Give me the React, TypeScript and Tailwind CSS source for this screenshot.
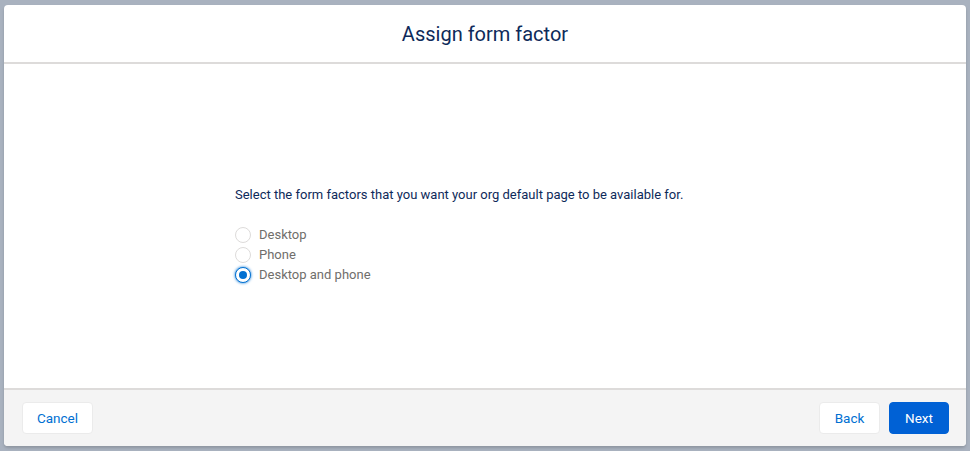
import { useState } from 'react';

const OPTIONS = ['Desktop', 'Phone', 'Desktop and phone'] as const;

export default function App() {
  const [selected, setSelected] = useState<string>('Desktop and phone');

  return (
    <div
      className="h-[451px] w-[970px] overflow-hidden bg-[#a9b2bf] pl-[4px] pr-[4px] pt-[5px]"
      style={{ fontFamily: 'Roboto, "Noto Sans", Arial, sans-serif' }}
    >
      {/* Modal */}
      <div className="flex h-[441px] w-[962px] flex-col overflow-hidden rounded-[4px] bg-white shadow-[0_2px_3px_rgba(0,0,0,0.16)]">
        {/* Header */}
        <div className="flex h-[59px] flex-none items-center justify-center border-b-2 border-[#dddbda]">
          <h2 className="text-[20px] leading-[24px] text-[#0e2a5a]">Assign form factor</h2>
        </div>

        {/* Body */}
        <div className="flex flex-1 items-center justify-center pt-[18px]">
          <div className="w-[500px]">
            <p className="text-[13px] leading-[20px] text-[#0e2a5a]">
              Select the form factors that you want your org default page to be available for.
            </p>
            <div className="mt-[20px] flex flex-col">
              {OPTIONS.map(opt => {
                const on = selected === opt;
                return (
                  <label
                    key={opt}
                    className="flex h-[20px] cursor-pointer items-center gap-[8px]"
                    onClick={() => setSelected(opt)}
                  >
                    <span
                      className={
                        on
                          ? 'flex h-[16px] w-[16px] items-center justify-center rounded-full border border-[#0070d2] bg-white shadow-[0_0_3px_#0070d2]'
                          : 'flex h-[16px] w-[16px] items-center justify-center rounded-full border border-[#dddbda] bg-white'
                      }
                    >
                      {on && <span className="h-[8px] w-[8px] rounded-full bg-[#0070d2]" />}
                    </span>
                    <span className="text-[13px] leading-[20px] text-[#706e6b]">{opt}</span>
                  </label>
                );
              })}
            </div>
          </div>
        </div>

        {/* Footer */}
        <div className="flex h-[58px] flex-none items-center justify-between border-t-2 border-[#dddbda] bg-[#f4f4f4] pl-[18px] pr-[17px]">
          <button className="h-[32px] w-[71px] rounded-[4px] border border-[#ebebeb] bg-white text-[13.5px] text-[#0070d2]">
            Cancel
          </button>
          <div className="flex gap-[9px]">
            <button className="h-[32px] w-[61px] rounded-[4px] border border-[#ebebeb] bg-white text-[13.5px] text-[#0070d2]">
              Back
            </button>
            <button className="h-[32px] w-[60px] rounded-[4px] border border-[#0061d5] bg-[#0061d5] text-[13.5px] text-white">
              Next
            </button>
          </div>
        </div>
      </div>
    </div>
  );
}
